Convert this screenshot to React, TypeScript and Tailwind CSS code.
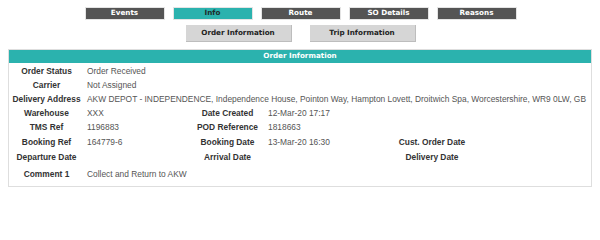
import React from "react";

const tabs = ["Events", "Info", "Route", "SO Details", "Reasons"];

function Label({ children }: { children?: React.ReactNode }) {
  return <div className="flex items-center justify-center font-bold text-[#333] whitespace-nowrap">{children}</div>;
}

function Value({ children, span }: { children?: React.ReactNode; span?: boolean }) {
  return (
    <div className={`flex items-center pl-[3px] text-[#555] whitespace-nowrap ${span ? "col-span-5" : ""}`}>
      {children}
    </div>
  );
}

export default function App() {
  return (
    <div className="w-[600px] h-[200px] bg-white overflow-hidden">
      {/* Top tabs */}
      <div className="flex justify-center gap-[8px] pt-[7px] pl-[1px]">
        {tabs.map((t) => (
          <div
            key={t}
            className={`w-[80px] h-[13px] flex items-center justify-center font-['DejaVu_Sans',sans-serif] font-bold text-[7.2px] border border-[#e4e4e4] ${
              t === "Info" ? "bg-[#2bb2ae] text-[#1e2b2b]" : "bg-[#545454] text-white"
            }`}
          >
            {t}
          </div>
        ))}
      </div>

      {/* Sub tabs */}
      <div className="flex justify-center gap-[18px] mt-[5px] pl-[1px]">
        {["Order Information", "Trip Information"].map((t) => (
          <div
            key={t}
            className="w-[106px] h-[17px] flex items-center justify-center bg-[#d6d6d6] border-b border-r border-[#bdbdbd] font-['DejaVu_Sans',sans-serif] font-bold text-[7.2px] text-[#222]"
          >
            {t}
          </div>
        ))}
      </div>

      {/* Panel */}
      <div className="mx-[8px] mt-[7px] border border-[#dedede] pb-[3px]">
        <div className="h-[13px] bg-[#2bb2ae] flex items-center justify-center text-white font-bold font-['DejaVu_Sans',sans-serif] text-[7.2px]">
          Order Information
        </div>
        <div className="grid grid-cols-[75px_106px_75px_131px_72px_1fr] grid-rows-[14px_14px_14px_14px_15px_14px_17px_17px] pt-[1px] font-['Liberation_Sans',Arial,sans-serif] text-[8.4px]">
          <Label>Order Status</Label>
          <Value span>Order Received</Value>
          <Label>Carrier</Label>
          <Value span>Not Assigned</Value>
          <Label>Delivery Address</Label>
          <Value span>
            AKW DEPOT - INDEPENDENCE, Independence House, Pointon Way, Hampton Lovett, Droitwich Spa, Worcestershire, WR9 0LW, GB
          </Value>
          <Label>Warehouse</Label>
          <Value>XXX</Value>
          <Label>Date Created</Label>
          <Value>12-Mar-20 17:17</Value>
          <Label />
          <Value />
          <Label>TMS Ref</Label>
          <Value>1196883</Value>
          <Label>POD Reference</Label>
          <Value>1818663</Value>
          <Label />
          <Value />
          <Label>Booking Ref</Label>
          <Value>164779-6</Value>
          <Label>Booking Date</Label>
          <Value>13-Mar-20 16:30</Value>
          <Label>Cust. Order Date</Label>
          <Value />
          <Label>Departure Date</Label>
          <Value />
          <Label>Arrival Date</Label>
          <Value />
          <Label>Delivery Date</Label>
          <Value />
          <Label>Comment 1</Label>
          <Value span>Collect and Return to AKW</Value>
        </div>
      </div>
    </div>
  );
}
